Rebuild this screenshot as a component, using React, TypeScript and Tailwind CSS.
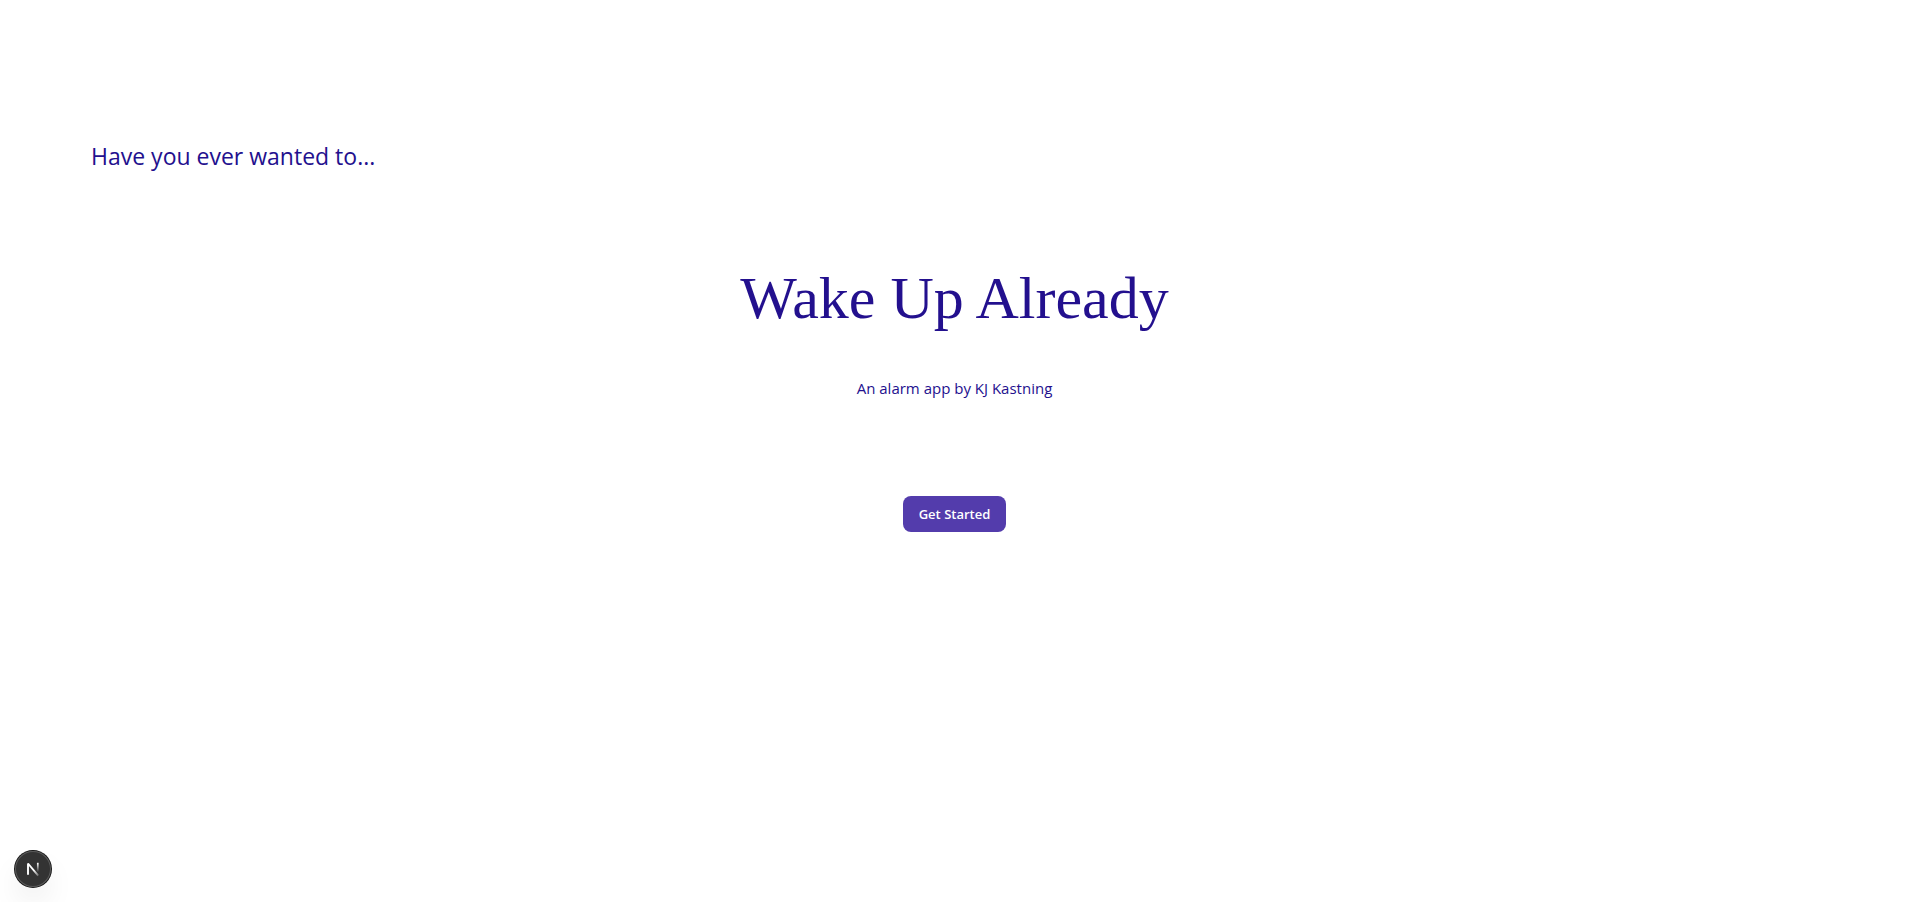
import React from "react";

function DevIndicator() {
  return (
    <button
      type="button"
      aria-label="Open developer tools"
      className="fixed bottom-[15px] left-[15px] flex size-9 items-center justify-center rounded-full bg-[#333333] shadow-[0_0_0_1px_#171717,inset_0_0_0_1px_#5a5a5a,0_16px_32px_-8px_rgba(0,0,0,0.2)]"
    >
      <svg width="40" height="40" viewBox="0 0 40 40" fill="none" className="shrink-0" aria-hidden="true">
        <defs>
          <linearGradient id="stem" x1="25" y1="14" x2="25" y2="23" gradientUnits="userSpaceOnUse">
            <stop stopColor="white" />
            <stop offset="1" stopColor="white" stopOpacity="0" />
          </linearGradient>
          <linearGradient id="diagonal" x1="21" y1="21" x2="26.5" y2="28" gradientUnits="userSpaceOnUse">
            <stop stopColor="white" />
            <stop offset="1" stopColor="white" stopOpacity="0.1" />
          </linearGradient>
        </defs>
        <path d="M15 25.8V14.5L25.2 26.6" stroke="url(#diagonal)" strokeWidth="1.9" strokeLinejoin="bevel" />
        <path d="M24.8 13.8V23" stroke="url(#stem)" strokeWidth="1.7" />
      </svg>
    </button>
  );
}

export default function App() {
  return (
    <div className="min-h-screen bg-white font-['Segoe_UI','Open_Sans',sans-serif] text-[#23108e]">
      <main className="flex flex-col items-center px-[91px] pt-[140px]">
        <p className="self-start text-[23px] leading-8">Have you ever wanted to...</p>
        <h1 className="mt-24 font-['Liberation_Serif',serif] text-[60px] leading-[60px]">Wake Up Already</h1>
        <p className="mt-12 text-[15px] leading-6">An alarm app by KJ Kastning</p>
        <button
          type="button"
          className="mt-24 h-9 rounded-lg bg-[#533cac] px-4 text-[13px] leading-5 font-semibold text-white"
        >
          Get Started
        </button>
      </main>
      <DevIndicator />
    </div>
  );
}
